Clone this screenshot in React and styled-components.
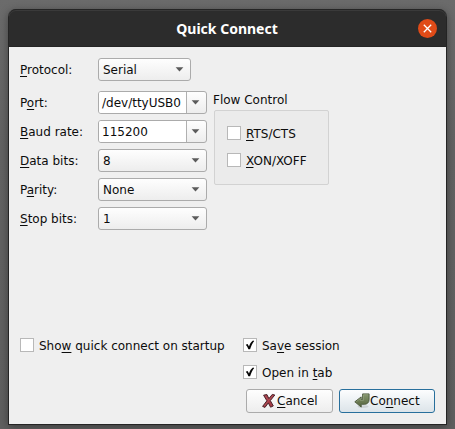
import React from "react";
import styled, { createGlobalStyle, css } from "styled-components";

const Global = createGlobalStyle`
  * { box-sizing: border-box; }
  body { margin: 0; background: #646464; }
`;

const Desktop = styled.main`
  width: 455px;
  height: 429px;
  padding: 9px 8px 4px;
  overflow: hidden;
  background: linear-gradient(#6b6b6b, #636363 35%, #606060);
  font: 12px/14px "DejaVu Sans", sans-serif;
  color: #0c0c0c;
  white-space: nowrap;
`;

const Window = styled.section`
  width: 439px;
  height: 416px;
  display: flex;
  flex-direction: column;
  border: 1px solid #242424;
  border-top: 0;
  border-radius: 8px 8px 0 0;
  background: #efefef;
  box-shadow: 0 2px 9px rgba(0, 0, 0, 0.38);
`;

const TitleBar = styled.header`
  height: 38px;
  flex: none;
  display: grid;
  grid-template-columns: 27px 1fr 28px;
  align-items: center;
  border-radius: 7px 7px 0 0;
  background: #2c2c2c;
  box-shadow: inset 0 1px #252525, inset 0 2px #3a3a3a, inset 0 -1px #252525;
`;

const Title = styled.h1`
  grid-column: 2;
  margin: 0;
  padding-top: 2px;
  text-align: center;
  font: 700 14px/20px "Noto Sans", sans-serif;
  color: #fff;
`;

const CloseButton = styled.button`
  width: 19px;
  height: 19px;
  padding: 0;
  border: 0;
  border-radius: 50%;
  background: #e04b18;
  svg { display: block; }
`;

const Content = styled.div`
  flex: 1;
  display: flex;
  flex-direction: column;
  padding: 11px;
`;

const Settings = styled.div`
  display: flex;
  gap: 6px;
  margin-top: 10px;
`;

const Fields = styled.div`
  display: flex;
  flex-direction: column;
  gap: 6px;
`;

const FieldRow = styled.label`
  display: grid;
  grid-template-columns: 78px auto;
  justify-content: start;
  align-items: center;
`;

const Mnemonic = styled.span`
  text-decoration: underline;
  text-decoration-thickness: 1px;
  text-underline-offset: 2px;
  text-decoration-skip-ink: none;
`;

const ComboBox = styled.div`
  width: ${(p) => p.$width}px;
  height: 23px;
  display: flex;
  border: 1px solid #ababab;
  border-radius: 3px;
  background: linear-gradient(#fefefe, #ededed);
  overflow: hidden;
`;

const ComboValue = styled.span`
  flex: 1;
  padding: 4px 0 0 4px;
  ${(p) => p.$editable && css`
    padding-left: 3px;
    border-right: 1px solid #b0b0b0;
    background: #fff;
  `}
`;

const ComboArrow = styled.span`
  width: 19px;
  display: grid;
  place-items: center;
  padding-right: 2px;
`;

const Group = styled.fieldset`
  margin: 0;
  padding: 0;
  border: 0;
  min-width: 0;
`;

const GroupTitle = styled.div`
  padding-top: 2px;
  height: 19px;
`;

const GroupFrame = styled.div`
  width: 115px;
  height: 75px;
  margin-left: 1px;
  padding: 15px 12px;
  display: flex;
  flex-direction: column;
  gap: 13px;
  border: 1px solid #d2d2d2;
  border-radius: 2px;
  background: #ebebeb;
`;

const CheckRow = styled.label`
  display: flex;
  gap: 5px;
  height: 14px;
  line-height: 16px;
`;

const CheckMark = styled.span`
  width: 14px;
  height: 14px;
  flex: none;
  border: 1px solid #b8b8b8;
  background: #fff;
  svg { display: block; }
`;

const Options = styled.div`
  display: grid;
  grid-template-columns: 223px auto;
  justify-content: start;
  row-gap: 13px;
  margin-top: auto;
`;

const SecondColumn = styled.div`
  grid-column: 2;
`;

const Actions = styled.footer`
  display: flex;
  justify-content: flex-end;
  gap: 6px;
  margin-top: 10px;
`;

const ActionButton = styled.button`
  width: ${(p) => p.$width}px;
  height: 24px;
  display: flex;
  align-items: center;
  padding: 0 0 0 14px;
  border: 1px solid ${(p) => (p.$primary ? "#286f9c" : "#ababab")};
  border-radius: 3px;
  background: ${(p) => (p.$primary ? "linear-gradient(#fcfdfe, #dce4e9)" : "linear-gradient(#fefefe, #ededed)")};
  font: inherit;
  line-height: 16px;
  color: inherit;
  svg { flex: none; }
`;

/* Renders a label in which the character after & is the underlined shortcut key. */
function Label({ text }) {
  const at = text.indexOf("&");
  return (
    <span>
      {text.slice(0, at)}
      <Mnemonic>{text[at + 1]}</Mnemonic>
      {text.slice(at + 2)}
    </span>
  );
}

function Field({ label, value, width = 109, editable = false }) {
  return (
    <FieldRow>
      <Label text={label} />
      <ComboBox $width={width}>
        <ComboValue $editable={editable}>{value}</ComboValue>
        <ComboArrow>
          <svg width="9" height="5" viewBox="0 0 9 5">
            <path d="M.6.3h7.8L4.5 4.6z" fill="#5b5b5b" />
          </svg>
        </ComboArrow>
      </ComboBox>
    </FieldRow>
  );
}

function Check({ label, checked }) {
  return (
    <CheckRow>
      <CheckMark>
        {checked && (
          <svg width="12" height="12" viewBox="0 0 12 12">
            <path d="M1.8 5.8 3.6 5 5 7.5C5.8 5.1 7 3.1 9 1.6L10.2 2C8.4 4.2 7.1 7 6.1 10.3H4.4C3.8 8.6 2.9 7.1 1.8 5.8Z" fill="#050505" />
          </svg>
        )}
      </CheckMark>
      <Label text={label} />
    </CheckRow>
  );
}

function CancelIcon() {
  return (
    <svg width="16" height="16" viewBox="0 0 16 16">
      <path d="M2.6 2.2 5.9 1.5 7.9 5.6 11.3 1.4 13.8 2 9.3 7.6 12.3 12.9 9.6 14.2 7.3 9.9 4 14.4 1.6 13.4 5.9 7.8Z" fill="#a53b46" stroke="#4a262c" strokeWidth="1" strokeLinejoin="round" />
      <path d="M4.2 2.7 7.7 7.5 12 2.4M7.2 8.4 3.2 13" fill="none" stroke="#c0646c" strokeWidth=".5" />
    </svg>
  );
}

function ConnectIcon() {
  return (
    <svg width="16" height="16" viewBox="0 0 16 16">
      <defs>
        <linearGradient id="returnArrow" x1="0" y1="0" x2="0" y2="1">
          <stop stopColor="#85966f" />
          <stop offset="1" stopColor="#56663f" />
        </linearGradient>
      </defs>
      <ellipse cx="9" cy="13.6" rx="5.5" ry="1.3" fill="#000" opacity=".1" />
      <path d="M8.6.9h6.5v5.8c0 2.8-1.9 4.4-4.4 4.6H7.2v2.8L.8 8.8 7.2 3.9v2.6h1.4Z" fill="url(#returnArrow)" stroke="#49573a" strokeWidth=".9" strokeLinejoin="round" />
      <path d="M9.4 1.7h4.9M2.2 8.7l4.1-3.1v1.8h3.1V2" fill="none" stroke="#a0ae8c" strokeWidth=".5" />
    </svg>
  );
}

export default function App() {
  return (
    <Desktop>
      <Global />
      <Window>
        <TitleBar>
          <Title>Quick Connect</Title>
          <CloseButton aria-label="Close">
            <svg width="19" height="19" viewBox="0 0 19 19">
              <path d="m5.8 5.8 7.4 7.4m0-7.4-7.4 7.4" stroke="#fff" strokeWidth="1.3" />
            </svg>
          </CloseButton>
        </TitleBar>
        <Content>
          <Field label="&Protocol:" value="Serial" width={93} />
          <Settings>
            <Fields>
              <Field label="P&ort:" value="/dev/ttyUSB0" editable />
              <Field label="&Baud rate:" value="115200" editable />
              <Field label="&Data bits:" value="8" />
              <Field label="P&arity:" value="None" />
              <Field label="&Stop bits:" value="1" />
            </Fields>
            <Group>
              <GroupTitle>Flow Control</GroupTitle>
              <GroupFrame>
                <Check label="&RTS/CTS" />
                <Check label="&XON/XOFF" />
              </GroupFrame>
            </Group>
          </Settings>
          <Options>
            <Check label="Sho&w quick connect on startup" />
            <Check label="Sa&ve session" checked />
            <SecondColumn>
              <Check label="Open in &tab" checked />
            </SecondColumn>
          </Options>
          <Actions>
            <ActionButton $width={87}>
              <CancelIcon />
              <Label text="&Cancel" />
            </ActionButton>
            <ActionButton $width={96} $primary>
              <ConnectIcon />
              <Label text="Co&nnect" />
            </ActionButton>
          </Actions>
        </Content>
      </Window>
    </Desktop>
  );
}
